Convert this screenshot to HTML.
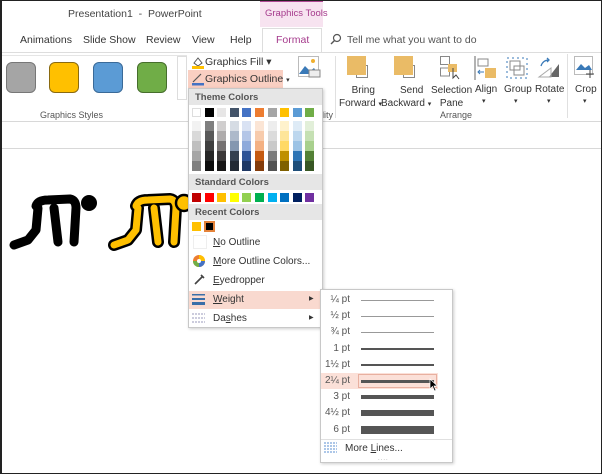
<!DOCTYPE html>
<html><head><style>
*{margin:0;padding:0;box-sizing:border-box}
body{width:602px;height:474px;overflow:hidden;background:#fff;font-family:"Liberation Sans",sans-serif;font-size:10px;color:#333;position:relative}
.a{position:absolute;white-space:nowrap}
.sw{position:absolute;width:9px;height:9px}
</style></head><body>
<div class="a" style="left:0;top:0;width:602px;height:474px;border:1px solid #222;border-left-width:2px;z-index:50;pointer-events:none"></div>
<div class="a" style="left:68px;top:8px;font-size:10.5px;color:#444">Presentation1 &nbsp;- &nbsp;PowerPoint</div>
<div class="a" style="left:260px;top:0;width:63px;height:27px;background:#f7e3f0;border-top:2px solid #b04a95"></div>
<div class="a" style="left:265px;top:8px;font-size:9.5px;color:#a53a8c">Graphics Tools</div>
<div class="a" style="left:20px;top:34px;font-size:10.5px">Animations</div>
<div class="a" style="left:83px;top:34px;font-size:10.5px">Slide Show</div>
<div class="a" style="left:146px;top:34px;font-size:10.5px">Review</div>
<div class="a" style="left:192px;top:34px;font-size:10.5px">View</div>
<div class="a" style="left:230px;top:34px;font-size:10.5px">Help</div>
<div class="a" style="left:262px;top:28px;width:60px;height:25px;background:#fff;border:1px solid #ddd;border-bottom:none"></div>
<div class="a" style="left:276px;top:34px;font-size:10.5px;color:#a53a8c">Format</div>
<svg class="a" style="left:330px;top:33px" width="12" height="13"><circle cx="7" cy="5" r="3.5" fill="none" stroke="#555" stroke-width="1.2"/><line x1="4.5" y1="7.5" x2="1" y2="11" stroke="#555" stroke-width="1.4"/></svg>
<div class="a" style="left:347px;top:34px;font-size:10.5px;color:#555">Tell me what you want to do</div>
<div class="a" style="left:0;top:52px;width:602px;height:1px;background:#ddd"></div>
<div class="a" style="left:6px;top:62px;width:30px;height:31px;background:#a5a5a5;border:1.5px solid #777;border-radius:6px"></div>
<div class="a" style="left:49px;top:62px;width:30px;height:31px;background:#ffc000;border:1.5px solid #8a6a10;border-radius:6px"></div>
<div class="a" style="left:93px;top:62px;width:30px;height:31px;background:#5b9bd5;border:1.5px solid #3a6a98;border-radius:6px"></div>
<div class="a" style="left:137px;top:62px;width:30px;height:31px;background:#70ad47;border:1.5px solid #466e2c;border-radius:6px"></div>
<div class="a" style="left:177px;top:56px;width:10px;height:44px;border:1px solid #ddd"></div>
<div class="a" style="left:0;top:55px;width:187px;height:1px;background:#e5e5e5"></div>
<div class="a" style="left:40px;top:110px;font-size:9px;color:#555">Graphics Styles</div>
<svg class="a" style="left:191px;top:55px" width="14" height="14"><path d="M3 8 L7 3 L11 8 L7 11Z" fill="none" stroke="#555"/><rect x="1" y="11" width="12" height="3" fill="#ffc000"/></svg>
<div class="a" style="left:205px;top:56px;font-size:10.5px">Graphics Fill ▾</div>
<div class="a" style="left:188px;top:70px;width:95px;height:18px;background:#f9cfc2"></div>
<svg class="a" style="left:191px;top:72px" width="14" height="14"><path d="M2 10 L10 2" stroke="#555" stroke-width="1.2"/><rect x="1" y="11" width="12" height="2.5" fill="#4472c4"/></svg>
<div class="a" style="left:205px;top:73px;font-size:10.5px">Graphics Outline <span style="font-size:7px">▾</span></div>
<svg class="a" style="left:298px;top:56px" width="24" height="24"><rect x="0.5" y="0.5" width="20" height="20" fill="#fff" stroke="#bbb"/><circle cx="15" cy="5" r="2" fill="#f0b030"/><path d="M1 18 L7 10 L12 15 L16 12 L20 18Z" fill="#3a7ab8"/><rect x="11" y="14" width="11" height="7" fill="#eee" stroke="#888"/></svg>
<div class="a" style="left:322px;top:110px;font-size:9px;color:#555">lity</div>
<div class="a" style="left:335px;top:56px;width:1px;height:62px;background:#e0e0e0"></div>
<div class="a" style="left:356px;top:65px;width:12px;height:13px;border:1px solid #888;background:#fff"></div>
<div class="a" style="left:347px;top:56px;width:19px;height:19px;background:#eabb66"></div>
<div class="a" style="left:339px;top:84px;text-align:center;font-size:10px;line-height:13px">&nbsp;&nbsp;Bring<br>Forward <span style="font-size:7px">▾</span></div>
<div class="a" style="left:403px;top:65px;width:12px;height:13px;border:1px solid #888;background:#fff"></div>
<div class="a" style="left:394px;top:56px;width:19px;height:19px;background:#eabb66"></div>
<div class="a" style="left:381px;top:84px;text-align:center;font-size:10px;line-height:13px">&nbsp;&nbsp;&nbsp;&nbsp;Send<br>Backward <span style="font-size:7px">▾</span></div>
<svg class="a" style="left:440px;top:56px" width="22" height="24"><rect x="0.5" y="0.5" width="9" height="8" fill="none" stroke="#888"/><rect x="0.5" y="12" width="9" height="8" fill="none" stroke="#888"/><rect x="8" y="8" width="9" height="8" fill="#eabb66"/><path d="M13 12 L13 22 L16 19 L19 23" fill="none" stroke="#444"/></svg>
<div class="a" style="left:431px;top:84px;text-align:center;font-size:10px;line-height:13px">Selection<br>Pane</div>
<svg class="a" style="left:474px;top:56px" width="24" height="24"><line x1="1" y1="0" x2="1" y2="24" stroke="#666"/><rect x="4" y="3" width="10" height="7" fill="none" stroke="#888"/><rect x="11" y="12" width="11" height="10" fill="#eabb66"/><path d="M10 16 L4 16 M6 14 L4 16 L6 18" stroke="#3a7ab8" fill="none"/></svg>
<div class="a" style="left:475px;top:84px;font-size:10px">Align</div>
<div class="a" style="left:482px;top:97px;font-size:7px">▾</div>
<svg class="a" style="left:505px;top:56px" width="24" height="24"><rect x="2" y="2" width="20" height="20" fill="none" stroke="#3a7ab8" stroke-dasharray="2 3"/><rect x="5" y="5" width="10" height="9" fill="none" stroke="#888"/><rect x="9" y="10" width="10" height="9" fill="none" stroke="#888"/></svg>
<div class="a" style="left:504px;top:84px;font-size:10px">Group</div>
<div class="a" style="left:514px;top:97px;font-size:7px">▾</div>
<svg class="a" style="left:537px;top:56px" width="24" height="24"><path d="M12 21 L22 8 L22 21Z" fill="#666"/><path d="M2 21 L14 21 L14 12Z" fill="none" stroke="#aaa"/><path d="M4 10 Q6 4 12 4 M10 2 L12 4 L10 6" fill="none" stroke="#3a7ab8" stroke-width="1.3"/></svg>
<div class="a" style="left:535px;top:84px;font-size:10px">Rotate</div>
<div class="a" style="left:547px;top:97px;font-size:7px">▾</div>
<div class="a" style="left:440px;top:110px;font-size:9px;color:#555">Arrange</div>
<div class="a" style="left:567px;top:54px;width:1px;height:64px;background:#e0e0e0"></div>
<svg class="a" style="left:574px;top:56px" width="24" height="24"><rect x="0.5" y="0.5" width="18" height="18" fill="#fff" stroke="#bbb"/><path d="M2 14 L7 8 L11 12 L15 9 L18 14Z" fill="#3a7ab8"/><path d="M16 14 L16 22 M12 18 L20 18" stroke="#444"/></svg>
<div class="a" style="left:575px;top:84px;font-size:10px">Crop</div>
<div class="a" style="left:583px;top:97px;font-size:7px">▾</div>
<div class="a" style="left:0;top:121px;width:602px;height:1px;background:#d8d8d8"></div>
<div class="a" style="left:0;top:148px;width:602px;height:1px;background:#d8d8d8"></div>
<svg class="a" style="left:8px;top:190px" width="190" height="64">
<g stroke="#000" stroke-width="9" stroke-linecap="round" stroke-linejoin="round" fill="none">
<path d="M28 16 Q30 10 40 10 L62 9 Q68 10 68 18 L66 52"/><path d="M30 18 L28 40 L20 50 L6 55"/><path d="M46 18 L50 52"/></g>
<circle cx="81" cy="13" r="8" fill="#000"/>
<g stroke="#000" stroke-width="12" stroke-linecap="round" stroke-linejoin="round" fill="none">
<path d="M128 16 Q130 10 140 10 L162 9 Q168 10 168 18 L166 52"/><path d="M130 18 L128 40 L120 50 L106 55"/><path d="M146 18 L150 52"/></g>
<g stroke="#ffc000" stroke-width="7" stroke-linecap="round" stroke-linejoin="round" fill="none">
<path d="M128 16 Q130 10 140 10 L162 9 Q168 10 168 18 L166 52"/><path d="M130 18 L128 40 L120 50 L106 55"/><path d="M146 18 L150 52"/></g>
<circle cx="176" cy="13" r="8" fill="#ffc000" stroke="#000" stroke-width="2.5"/>
</svg>
<div class="a" style="left:188px;top:88px;width:135px;height:240px;background:#fff;border:1px solid #c8c8c8;box-shadow:1px 1px 3px rgba(0,0,0,.2)"></div>
<div class="a" style="left:189px;top:89px;width:133px;height:16px;background:#e6e6e6;font-weight:bold;font-size:9.5px;color:#555;padding:3px 0 0 6px">Theme Colors</div>
<div class="a" style="left:189px;top:174px;width:133px;height:16px;background:#e6e6e6;font-weight:bold;font-size:9.5px;color:#555;padding:3px 0 0 6px">Standard Colors</div>
<div class="a" style="left:189px;top:204px;width:133px;height:16px;background:#e6e6e6;font-weight:bold;font-size:9.5px;color:#555;padding:3px 0 0 6px">Recent Colors</div>
<div id="sw"></div>
<div class="sw" style="left:192px;top:222px;background:#ffc000"></div>
<div class="sw" style="left:204px;top:221px;width:11px;height:11px;background:#000;border:2px solid #e4833a"></div>
<div class="a" style="left:193px;top:235px;width:14px;height:14px;border:1px solid #eee"></div>
<div class="a" style="left:213px;top:237px;font-size:10px"><u>N</u>o Outline</div>
<svg class="a" style="left:192px;top:254px" width="14" height="14"><circle cx="7" cy="7" r="6" fill="#ed7d31"/><path d="M7 7 L7 1 A6 6 0 0 1 13 7Z" fill="#ffc000"/><path d="M7 7 L13 7 A6 6 0 0 1 7 13Z" fill="#4472c4"/><path d="M7 7 L7 13 A6 6 0 0 1 1 7Z" fill="#70ad47"/><circle cx="7" cy="7" r="2" fill="#fff"/></svg>
<div class="a" style="left:213px;top:256px;font-size:10px"><u>M</u>ore Outline Colors...</div>
<svg class="a" style="left:193px;top:273px" width="13" height="13"><path d="M2 11 L9 4 M8 2 L11 5" stroke="#444" stroke-width="1.6"/></svg>
<div class="a" style="left:213px;top:275px;font-size:10px"><u>E</u>yedropper</div>
<div class="a" style="left:189px;top:291px;width:133px;height:18px;background:#f9d9cf"></div>
<svg class="a" style="left:192px;top:293px" width="13" height="13"><rect x="0" y="1" width="13" height="1.5" fill="#3a6ea8"/><rect x="0" y="5" width="13" height="2" fill="#3a6ea8"/><rect x="0" y="9" width="13" height="3" fill="#3a6ea8"/></svg>
<div class="a" style="left:213px;top:294px;font-size:10px"><u>W</u>eight</div>
<div class="a" style="left:309px;top:295px;font-size:6px">▶</div>
<svg class="a" style="left:192px;top:312px" width="13" height="13"><path d="M0 2 H13 M0 6 H13 M0 10 H13" stroke="#99b" stroke-dasharray="2 1"/></svg>
<div class="a" style="left:213px;top:313px;font-size:10px">Da<u>s</u>hes</div>
<div class="a" style="left:309px;top:314px;font-size:6px">▶</div>
<div class="a" style="left:320px;top:289px;width:133px;height:174px;background:#fff;border:1px solid #c8c8c8;box-shadow:1px 1px 3px rgba(0,0,0,.2)"></div>
<div class="a" style="left:321px;top:373px;width:117px;height:16px;background:#fbe0d8"></div>
<div class="a" style="left:358px;top:374px;width:79px;height:14px;border:1px solid #e8b0a0"></div>
<div id="wt"></div>
<div class="a" style="left:321px;top:439px;width:131px;height:1px;background:#e0e0e0"></div>
<svg class="a" style="left:324px;top:442px" width="13" height="11"><path d="M0 1 H13 M0 4 H13 M0 7 H13 M0 10 H13" stroke="#5b8fd0" stroke-dasharray="2 1"/></svg>
<div class="a" style="left:345px;top:443px;font-size:10px">More <u>L</u>ines...</div>
<div class="a" style="left:378px;top:456px;font-size:6px;color:#aaa;letter-spacing:1px">....</div>
<svg class="a" style="left:429px;top:378px" width="10" height="14"><path d="M1 1 L1 11 L3.5 8.5 L5.5 13 L7 12.3 L5 8 L8.5 8Z" fill="#000" stroke="#fff" stroke-width=".7"/></svg>
<script>
var th=[["#fff","#f2f2f2","#d9d9d9","#bfbfbf","#a6a6a6","#808080"],["#000","#7f7f7f","#595959","#3f3f3f","#262626","#0d0d0d"],["#e7e6e6","#d0cece","#aeabab","#757171","#3b3838","#181717"],["#44546a","#d6dce4","#adb9ca","#8497b0","#333f4f","#222a35"],["#4472c4","#d9e2f3","#b4c6e7","#8eaadb","#2f5496","#1f3864"],["#ed7d31","#fbe5d5","#f7cbac","#f4b183","#c55a11","#843c0b"],["#a5a5a5","#ededed","#dbdbdb","#c9c9c9","#7b7b7b","#525252"],["#ffc000","#fff2cc","#fee599","#ffd965","#bf9000","#7f6000"],["#5b9bd5","#deebf6","#bdd7ee","#9cc3e5","#2e75b5","#1e4e79"],["#70ad47","#e2efd9","#c5e0b3","#a8d08d","#538135","#375623"]];
var st=["#c00000","#ff0000","#ffc000","#ffff00","#92d050","#00b050","#00b0f0","#0070c0","#002060","#7030a0"];
var h="";
for(var i=0;i<10;i++){var x=192+i*12.6;
h+='<div class="sw" style="left:'+x+'px;top:108px;background:'+th[i][0]+';border:'+(i==0?'1px solid #ddd':'none')+'"></div>';
for(var j=1;j<6;j++)h+='<div class="sw" style="left:'+x+'px;top:'+(121+(j-1)*10)+'px;height:10px;background:'+th[i][j]+'"></div>';
h+='<div class="sw" style="left:'+x+'px;top:193px;background:'+st[i]+'"></div>';}
document.getElementById("sw").outerHTML=h;
var lb=["¼ pt","½ pt","¾ pt","1 pt","1½ pt","2¼ pt","3 pt","4½ pt","6 pt"],tk=[1,1,1,2,2,3,4,6,8];h="";
for(var k=0;k<9;k++){var y=300+k*16.2;
h+='<div class="a" style="left:322px;width:28px;text-align:right;top:'+(y-6)+'px;font-size:10px;color:#555">'+lb[k]+'</div>';
h+='<div class="a" style="left:361px;width:73px;top:'+(y-tk[k]/2)+'px;height:'+tk[k]+'px;background:'+(k<3?'#999':'#555')+'"></div>';}
document.getElementById("wt").outerHTML=h;
</script>
</body></html>
